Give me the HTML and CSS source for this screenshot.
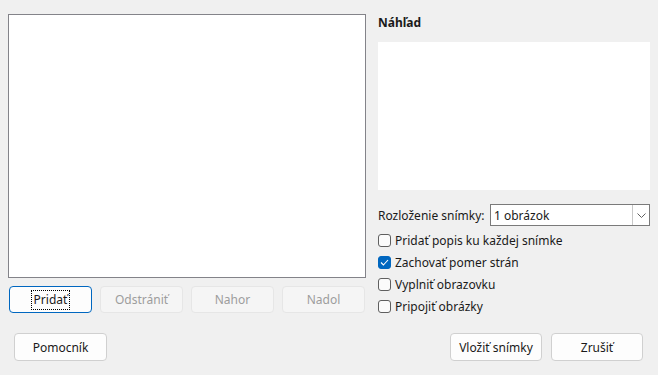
FILE: index.html
```html
<!DOCTYPE html>
<html lang="sk">
<head>
    <meta charset="UTF-8">
    <title>Fotoalbum</title>
    <link rel="stylesheet" href="styles.css">
</head>
<body>
    <div class="dialog">
        <div class="main">
            <div class="left-col">
                <div class="image-list"></div>
                <div class="list-buttons">
                    <button class="btn btn-focus"><span class="focus-ring">Pridať</span></button>
                    <button class="btn" disabled>Odstrániť</button>
                    <button class="btn" disabled>Nahor</button>
                    <button class="btn" disabled>Nadol</button>
                </div>
            </div>

            <div class="right-col">
                <div class="preview-title">Náhľad</div>
                <div class="preview-box"></div>

                <div class="layout-row">
                    <span class="layout-label">Rozloženie snímky:</span>
                    <div class="combo">
                        <span class="combo-value">1 obrázok</span>
                        <span class="combo-arrow">
                            <svg width="9" height="5" viewBox="0 0 9 5"><path d="M0.5 0.5 L4.5 4.5 L8.5 0.5" fill="none" stroke="#606060" stroke-width="1"/></svg>
                        </span>
                    </div>
                </div>

                <div class="options">
                    <label class="check-row"><span class="check"></span>Pridať popis ku každej snímke</label>
                    <label class="check-row"><span class="check checked">
                        <svg width="9" height="7" viewBox="0 0 9 7"><path d="M1 3.5 L3.4 6 L8 1" fill="none" stroke="#fff" stroke-width="1.1"/></svg>
                    </span>Zachovať pomer strán</label>
                    <label class="check-row"><span class="check"></span>Vyplniť obrazovku</label>
                    <label class="check-row"><span class="check"></span>Pripojiť obrázky</label>
                </div>
            </div>
        </div>

        <div class="bottom-bar">
            <button class="btn btn-wide btn-help">Pomocník</button>
            <div class="bottom-right">
                <button class="btn btn-wide">Vložiť snímky</button>
                <button class="btn btn-wide">Zrušiť</button>
            </div>
        </div>
    </div>
</body>
</html>
```

FILE: styles.css
```css
* {
    margin: 0;
    padding: 0;
    box-sizing: border-box;
}

body {
    font-family: "Noto Sans", "Open Sans", sans-serif;
    font-size: 12px;
    color: #1a1a1a;
    background: #f0f0f0;
    width: 658px;
    height: 375px;
    overflow: hidden;
}

.dialog {
    padding: 14px 8px 0 8px;
}

.main {
    display: flex;
    gap: 12px;
}

.left-col {
    width: 358px;
}

.image-list {
    height: 264px;
    background: #fff;
    border: 1px solid #838389;
}

.list-buttons {
    display: flex;
    gap: 8px;
    padding-left: 1px;
    margin-top: 8px;
}

.btn {
    font-family: inherit;
    font-size: 12px;
    color: #1a1a1a;
    width: 83px;
    height: 27px;
    background: #fdfdfd;
    border: 1px solid #d0d0d0;
    border-radius: 4px;
    display: flex;
    align-items: center;
    justify-content: center;
}

.btn:disabled {
    color: #9d9d9d;
    background: #f5f5f5;
    border-color: #e6e6e6;
}

.btn-focus {
    border-color: #0067c0;
}

.focus-ring {
    border: 1px dotted #000;
    padding: 2px 2px;
    line-height: 14px;
}

.right-col {
    width: 272px;
}

.preview-title {
    font-weight: bold;
    line-height: 16px;
    margin-top: 1px;
    margin-bottom: 11px;
}

.preview-box {
    height: 148px;
    background: #fff;
}

.layout-row {
    display: flex;
    align-items: center;
    justify-content: space-between;
    margin-top: 14px;
}

.combo {
    width: 160px;
    height: 22px;
    background: #fff;
    border: 1px solid #7a7a7a;
    display: flex;
    align-items: center;
}

.combo-value {
    flex: 1;
    padding-left: 3px;
}

.combo-arrow {
    width: 17px;
    height: 100%;
    border-left: 1px solid #c8c8c8;
    display: flex;
    align-items: center;
    justify-content: center;
}

.options {
    margin-top: 8px;
    display: flex;
    flex-direction: column;
    gap: 9px;
}

.check-row {
    display: flex;
    align-items: center;
    gap: 4px;
    line-height: 13px;
}

.check {
    width: 13px;
    height: 13px;
    border: 1px solid #5f5f5f;
    border-radius: 3px;
    background: #fbfbfb;
    display: flex;
    align-items: center;
    justify-content: center;
}

.check.checked {
    background: #0067c0;
    border-color: #0067c0;
}

.bottom-bar {
    display: flex;
    justify-content: space-between;
    margin-top: 20px;
    padding: 0 7px 0 6px;
}

.bottom-right {
    display: flex;
    gap: 9px;
}

.btn-wide {
    width: 92px;
    height: 28px;
}

.btn-help {
    width: 93px;
}
```
